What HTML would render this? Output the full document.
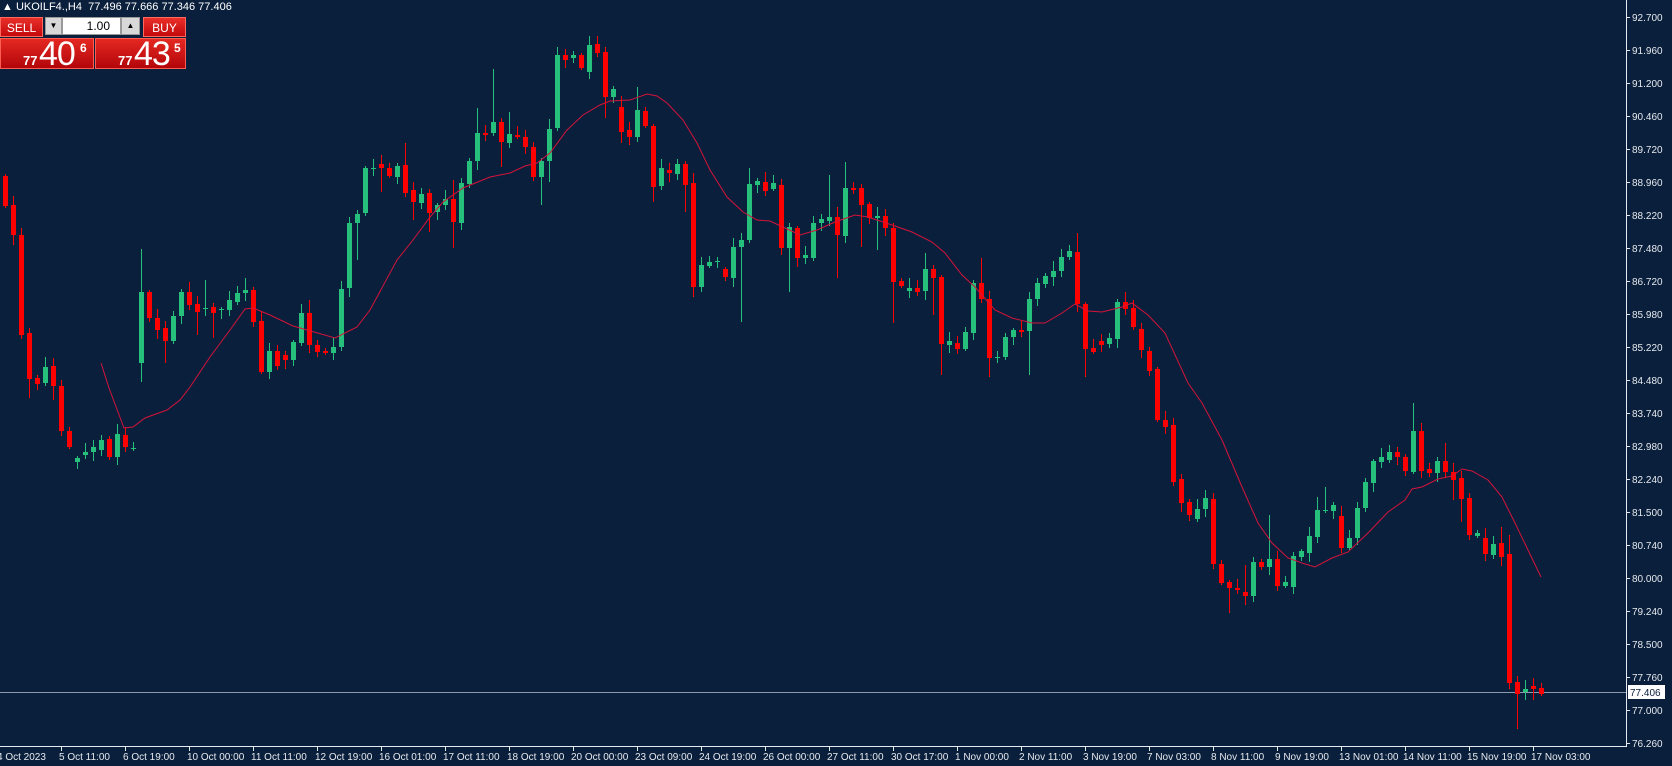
<!DOCTYPE html>
<html><head><meta charset="utf-8">
<style>
html,body{margin:0;padding:0;background:#0a1f3c;overflow:hidden}
body{width:1672px;height:766px;position:relative;font-family:"Liberation Sans",sans-serif}
#c{position:absolute;left:0;top:0}
.hdr{position:absolute;left:2px;top:1px;color:#fff;font-size:11px;white-space:pre}
.btn{position:absolute;top:17px;height:20px;background:linear-gradient(#e8302a,#c4080c);color:#fff;font-size:12px;line-height:20px;text-align:center;border:1px solid #ff6a60;box-sizing:border-box}
.pbox{position:absolute;top:38px;height:31px;background:linear-gradient(#e42822,#b3060a);border:1px solid #ff5c52;box-sizing:border-box;color:#fff}
.sm{position:absolute;font-size:13px;font-weight:bold;top:14px}
.big{position:absolute;font-size:34px;top:-4px;letter-spacing:-1px}
.sup{position:absolute;font-size:12px;font-weight:bold;top:2px}
</style></head><body>
<svg id="c" width="1672" height="766" xmlns="http://www.w3.org/2000/svg"></svg>
<div class="hdr">▲ UKOILF4.,H4  77.496 77.666 77.346 77.406</div>
<div class="btn" style="left:0;width:43px">SELL</div>
<div style="position:absolute;left:45px;top:17px;width:17px;height:18px;background:#d8d8d8;border:1px solid #999;box-sizing:border-box;font-size:8px;text-align:center;line-height:16px;color:#000">▼</div>
<div style="position:absolute;left:62px;top:17px;width:59px;height:18px;background:#fff;border:1px solid #999;box-sizing:border-box;font-size:12px;text-align:right;padding-right:10px;line-height:16px;color:#000">1.00</div>
<div style="position:absolute;left:121px;top:17px;width:19px;height:18px;background:#d8d8d8;border:1px solid #999;box-sizing:border-box;font-size:8px;text-align:center;line-height:16px;color:#000">▲</div>
<div class="btn" style="left:143px;width:43px">BUY</div>
<div class="pbox" style="left:0;width:94px"><span class="sm" style="left:22px">77</span><span class="big" style="left:38px">40</span><span class="sup" style="left:79px">6</span></div>
<div class="pbox" style="left:95px;width:91px"><span class="sm" style="left:22px">77</span><span class="big" style="left:38px">43</span><span class="sup" style="left:78px">5</span></div>
<script>
var D=[[176,206],[205,235,0,245],[235,335],[333,379,0,398],[378,384],[383,367],[366,386,0,400],[386,431],[431,447],[462,458],
[455,452],[452,447],[450,440],[439,457],[457,434],[435,447],[449,448],[363,292,249,382],[292,318],[318,330],
[328,341,0,363],[341,316],[316,292],[292,305],[304,312,0,335],[309,308,280],[307,313,0,338],[310,309],[310,300],[302,293],
[293,290,278],[290,322],[321,372],[372,351],[351,366],[355,360],[360,342],[343,313],[313,345,300],[345,352],
[351,353],[353,347],[347,289],[288,223],[223,214,0,260],[213,168],[168,168],[164,168,155,192],[168,176],[177,166],
[165,193,143],[190,202,0,220],[203,194],[193,213,0,232],[212,205],[205,199],[199,222,180,248],[223,183],[184,161],[161,133,108],
[133,135],[133,122,69],[122,142,0,167],[143,134,112],[135,137],[137,147],[147,177],[177,161,0,205],[161,129,0,182],[128,55],
[55,60],[58,55],[55,68],[72,45,36],[44,53,36],[52,97,0,118],[97,89],[107,132,96,143],[130,137],[137,110,87],
[111,126],[126,187,0,202],[186,168],[170,173],[174,164],[164,185,0,212],[183,287,0,297],[287,265],[266,262],[261,261],
[269,277],[278,247],[247,240,0,322],[240,184,168],[185,181],[182,191],[189,183],[185,248],[248,227,0,292],[228,258],
[258,255],[258,223],[223,219],[221,217,175],[217,235,0,278],[236,188,162],[188,190],[188,205,0,247],[204,218],[218,216,0,250],
[216,228],[228,282,0,323],[281,286],[291,288],[288,292],[291,269,253],[269,278,0,315],[277,344,0,375],[345,341],[343,349],
[349,332],[333,283],[283,299,258],[299,358,0,377],[357,357],[357,337],[337,330],[330,332],[331,299,0,375],[299,283],
[284,276],[277,271],[271,257],[257,251],[252,304,233],[304,349,0,377],[348,352],[341,345],[344,338],[339,302],
[302,309],[308,327],[329,350],[351,371],[369,420],[420,427],[425,482],[479,503],[502,515],[519,509],
[509,498],[499,564],[564,583],[582,588,0,613],[588,590],[592,596,565],[596,562],[562,567],[567,559,515],[559,586],
[586,582],[587,556],[557,551],[553,536],[537,510,497],[510,510,487],[511,505],[516,548],[548,538],[538,508],
[508,482],[483,461],[462,457],[460,452],[452,457],[457,471],[472,431,403],[431,471],[469,473],[473,461],
[461,472,443],[472,480,0,500],[478,499,0,522],[498,535],[536,533],[538,554],[555,544],[543,557,527],[554,683,535],[682,694,676,729],
[692,689],[686,689,678,700],[688,694]];
var MA=[[101,363],[109,388],[124,428],[133,427],[145,418],[167,410],[180,400],[190,387],[210,357],[230,330],[245,309],[253,308],[270,315],[293,326],[335,338],[357,327],[370,310],[397,260],[413,240],[430,217],[443,202],[463,188],[490,177],[510,173],[525,166],[537,163],[550,153],[567,130],[583,115],[600,105],[610,101],[630,100],[647,94],[657,96],[667,103],[683,120],[697,143],[710,170],[727,197],[743,212],[757,220],[770,221],[787,229],[800,235],[817,230],[835,222],[855,215],[868,217],[892,225],[912,232],[932,242],[945,253],[962,275],[975,287],[995,310],[1012,318],[1032,323],[1045,323],[1062,313],[1075,304],[1088,311],[1102,312],[1122,307],[1132,303],[1148,315],[1165,333],[1188,383],[1202,403],[1222,440],[1242,487],[1258,523],[1272,543],[1288,558],[1302,563],[1315,567],[1332,558],[1348,552],[1368,533],[1388,512],[1405,500],[1412,489],[1422,487],[1438,479],[1452,476],[1462,469],[1472,471],[1488,480],[1502,497],[1515,523],[1528,550],[1541,577]];
var F='font-family="Liberation Sans,sans-serif" font-size="10"';
var s='<rect width="1672" height="766" fill="#0a1f3c"/>';
s+='<line x1="0" y1="692.5" x2="1626" y2="692.5" stroke="#8c9aae" stroke-width="1"/>';
for(var i=0;i<D.length;i++){var d=D[i],x=5+8*i,o=d[0],c=d[1],t=Math.min(o,c),b=Math.max(o,c);
var h=d[2]||t-(2+(i*7)%9),l=d[3]||b+(2+(i*5)%8);var col=c<o?'#26c07c':(c>o?'#ff0000':'#26c07c');
s+='<line x1="'+(x+.5)+'" y1="'+h+'" x2="'+(x+.5)+'" y2="'+l+'" stroke="'+col+'" stroke-width="1"/>';
var hh=Math.max(b-t,1);s+='<rect x="'+(x-2)+'" y="'+t+'" width="5" height="'+hh+'" fill="'+col+'"/>';}
s+='<polyline fill="none" stroke="#d4143a" stroke-width="1" points="'+MA.map(function(p){return p.join(',')}).join(' ')+'"/>';
s+='<line x1="1626.5" y1="0" x2="1626.5" y2="746" stroke="#e6e9ee" stroke-width="1"/>';
s+='<line x1="0" y1="746.5" x2="1627" y2="746.5" stroke="#e6e9ee" stroke-width="1"/>';
var P=['92.700','91.960','91.200','90.460','89.720','88.960','88.220','87.480','86.720','85.980','85.220','84.480','83.740','82.980','82.240','81.500','80.740','80.000','79.240','78.500','77.760','77.000','76.260'];
for(var k=0;k<P.length;k++){var y=17+k*33;s+='<line x1="1626" y1="'+(y+.5)+'" x2="1630" y2="'+(y+.5)+'" stroke="#e6e9ee"/>';
s+='<text x="1632" y="'+(y+4)+'" fill="#e6e9ee" '+F+'>'+P[k]+'</text>';}
s+='<rect x="1628" y="685" width="37" height="14" fill="#fff"/><text x="1630" y="696" fill="#0a1f3c" '+F+'>77.406</text>';
var T=['5 Oct 11:00','6 Oct 19:00','10 Oct 00:00','11 Oct 11:00','12 Oct 19:00','16 Oct 01:00','17 Oct 11:00','18 Oct 19:00','20 Oct 00:00','23 Oct 09:00','24 Oct 19:00','26 Oct 00:00','27 Oct 11:00','30 Oct 17:00','1 Nov 00:00','2 Nov 11:00','3 Nov 19:00','7 Nov 03:00','8 Nov 11:00','9 Nov 19:00','13 Nov 01:00','14 Nov 11:00','15 Nov 19:00','17 Nov 03:00'];
s+='<text x="-3" y="760" fill="#e6e9ee" '+F+'>4 Oct 2023</text>';
for(var k=0;k<T.length;k++){var x=61+64*k;s+='<line x1="'+(x+.5)+'" y1="746" x2="'+(x+.5)+'" y2="751" stroke="#e6e9ee"/>';
s+='<text x="'+(x-2)+'" y="760" fill="#e6e9ee" '+F+'>'+T[k]+'</text>';}
document.getElementById('c').innerHTML=s;
</script>
</body></html>
